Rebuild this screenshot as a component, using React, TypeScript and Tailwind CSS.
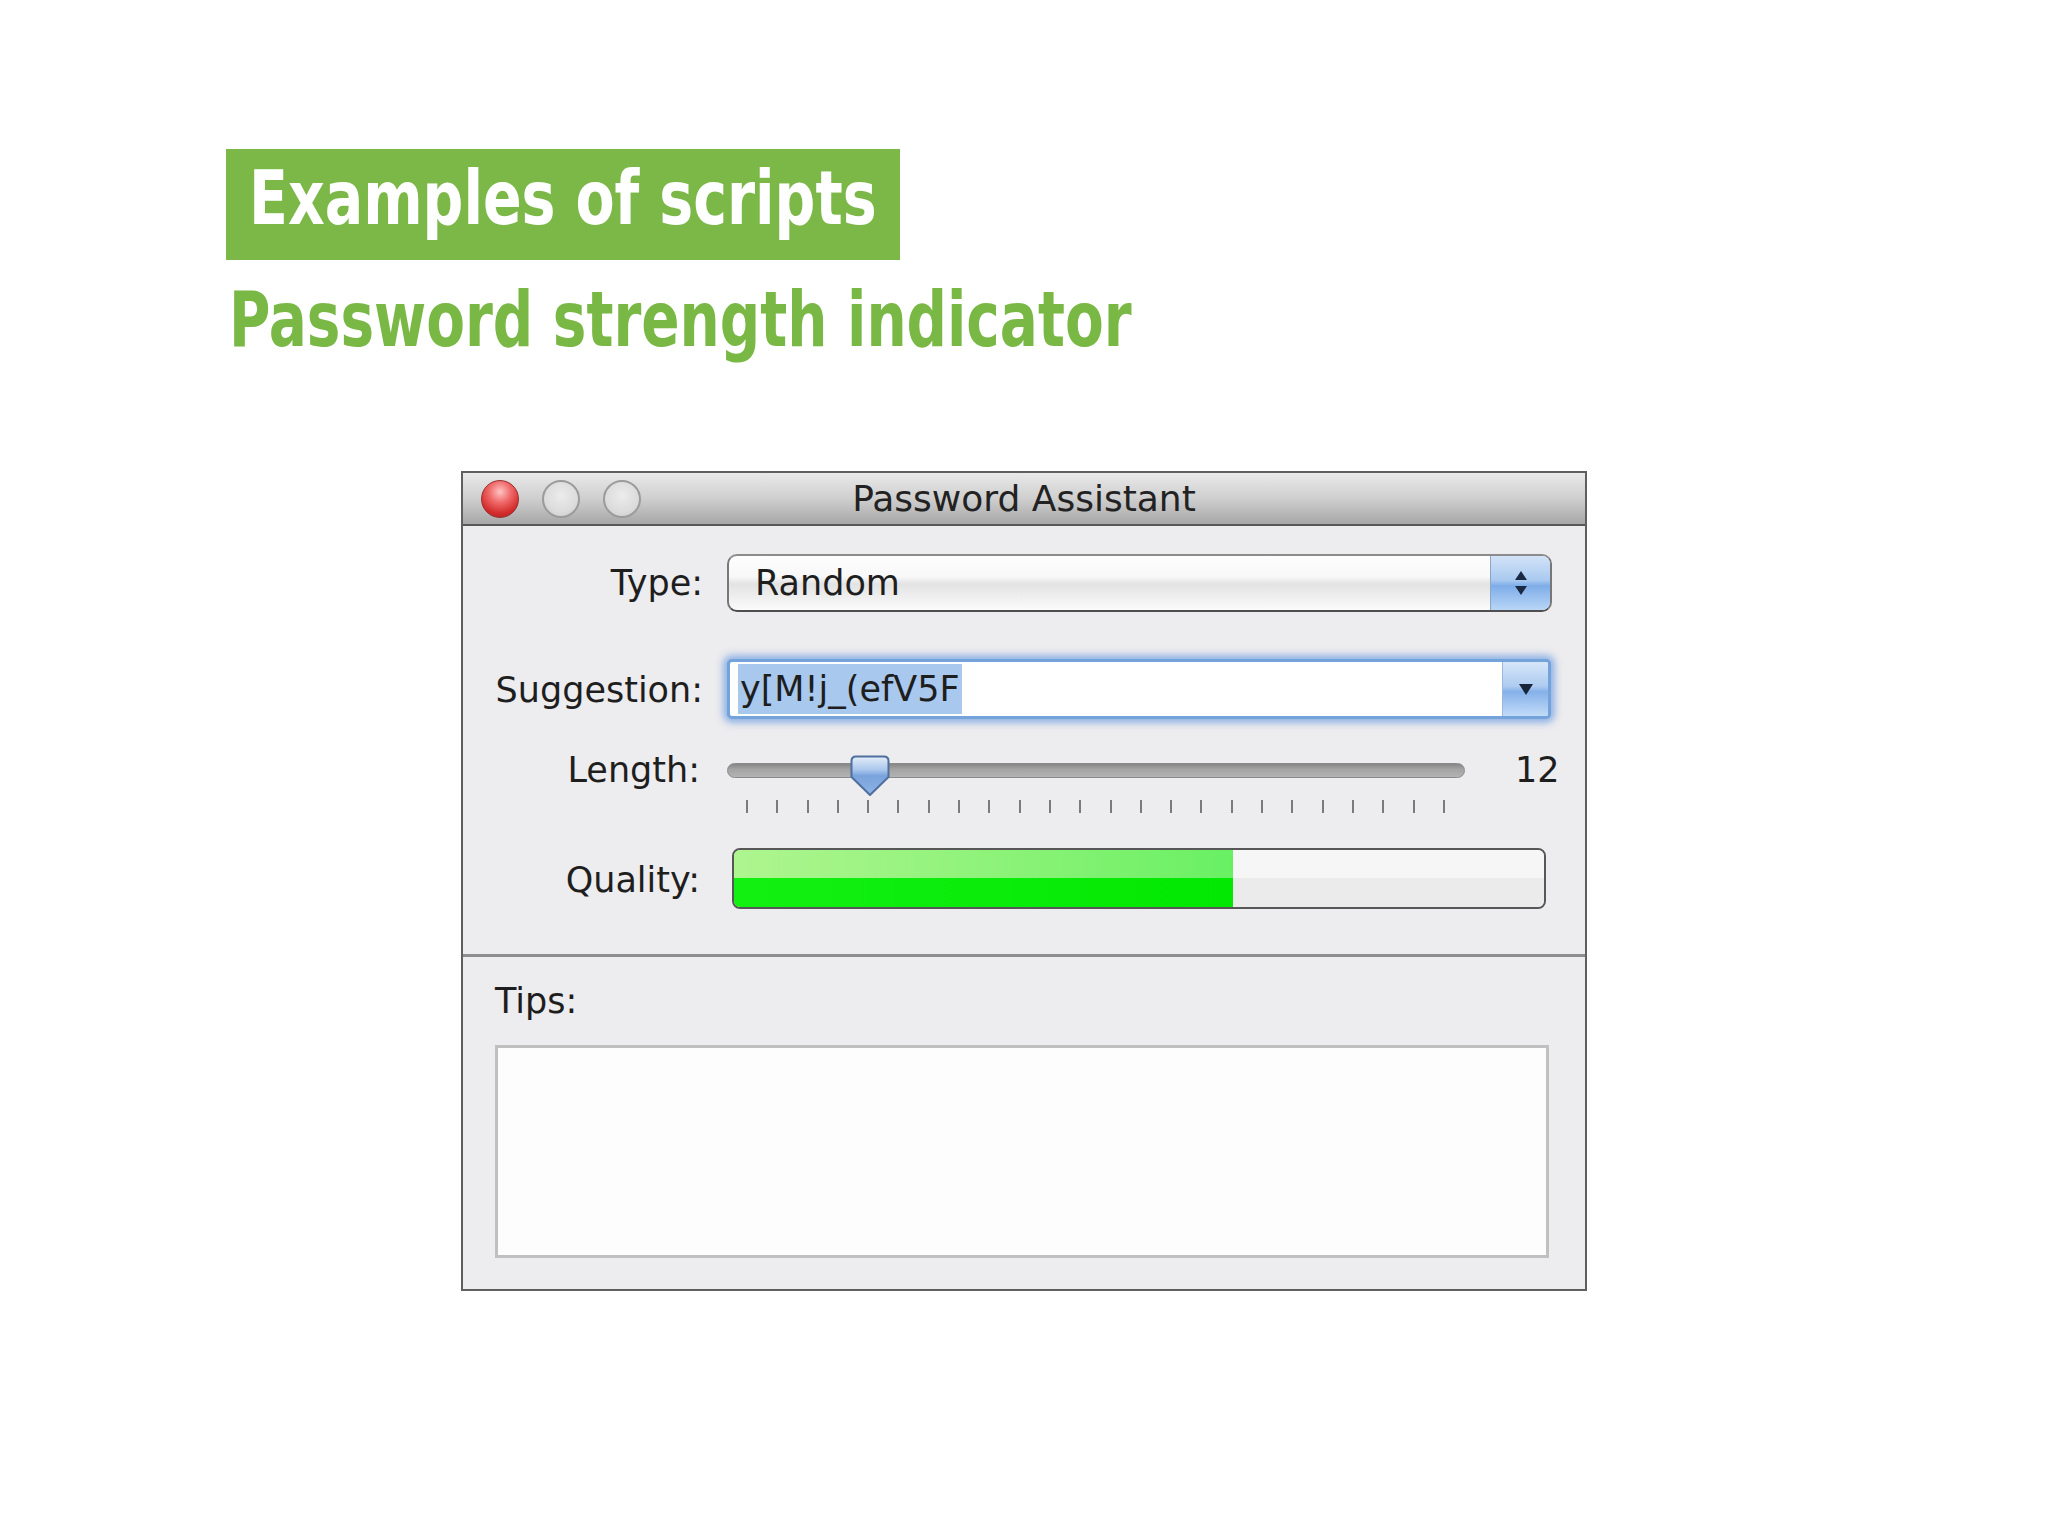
import React from "react";

const ticks = Array.from({ length: 24 }, (_, i) => i);

function Knob() {
  return (
    <svg width="40" height="42" viewBox="0 0 40 42">
      <defs>
        <linearGradient id="kg" x1="0" y1="0" x2="0" y2="1">
          <stop offset="0" stopColor="#e4eefa" />
          <stop offset="0.35" stopColor="#a9c6ec" />
          <stop offset="0.5" stopColor="#7aa3dc" />
          <stop offset="1" stopColor="#8fb4e6" />
        </linearGradient>
      </defs>
      <path
        d="M6 1.5 H34 Q38.5 1.5 38.5 6 V22 L20 40 L1.5 22 V6 Q1.5 1.5 6 1.5 Z"
        fill="url(#kg)"
        stroke="#4f6f9e"
        strokeWidth="2"
        strokeLinejoin="round"
      />
    </svg>
  );
}

function UpDown() {
  return (
    <svg width="16" height="30" viewBox="0 0 16 30">
      <path d="M8 3 L14 12 H2 Z" fill="#1b2a44" />
      <path d="M8 27 L14 18 H2 Z" fill="#1b2a44" />
    </svg>
  );
}

function Down() {
  return (
    <svg width="18" height="14" viewBox="0 0 18 14">
      <path d="M9 13 L16 2 H2 Z" fill="#17243a" />
    </svg>
  );
}

export default function App() {
  return (
    <div className="w-[2048px] h-[1536px] bg-white flex flex-col items-start overflow-hidden">
      {/* Banner */}
      <div className="mt-[149px] ml-[226px] w-[674px] h-[111px] bg-[#7bb848] pt-[12px] pl-[23px] overflow-hidden">
        <div className="origin-left scale-x-[0.845] whitespace-nowrap font-['DejaVu_Sans_Condensed','DejaVu_Sans',sans-serif] font-bold text-[75px] leading-none text-white">
          Examples of scripts
        </div>
      </div>
      {/* Subtitle */}
      <div className="mt-[21px] ml-[229px] origin-left scale-x-[0.815] whitespace-nowrap font-['DejaVu_Sans_Condensed','DejaVu_Sans',sans-serif] font-bold text-[77px] leading-none text-[#79b845]">
        Password strength indicator
      </div>

      {/* Window */}
      <div className="mt-[113px] ml-[461px] w-[1126px] border-2 border-[#5f5f5f] bg-[#edecee] flex flex-col font-['DejaVu_Sans',sans-serif] text-[35px] text-[#1e1e1e]">
        {/* Title bar */}
        <div className="h-[53px] shrink-0 bg-gradient-to-b from-[#e9e9e9] via-[#cfcfcf] to-[#a7a7a7] border-b-2 border-[#585858] grid grid-cols-[1fr_auto_1fr] items-center">
          <div className="flex items-center gap-[23px] pl-[18px]">
            <div className="w-[38px] h-[38px] rounded-full border border-[#9a3030] bg-[radial-gradient(circle_at_50%_30%,#ffc4c4_0%,#f06a6a_35%,#d32c2c_70%,#a51d1d_100%)]" />
            <div className="w-[38px] h-[38px] rounded-full border-2 border-[#9b9b9b] bg-[radial-gradient(circle_at_50%_40%,#ececec_0%,#dcdcdc_60%,#c9c9c9_100%)]" />
            <div className="w-[38px] h-[38px] rounded-full border-2 border-[#9b9b9b] bg-[radial-gradient(circle_at_50%_40%,#ececec_0%,#dcdcdc_60%,#c9c9c9_100%)]" />
          </div>
          <div className="leading-[40px] text-[36px] text-[#222] whitespace-nowrap">Password Assistant</div>
          <div />
        </div>

        {/* Type row */}
        <div className="mt-[28px] h-[58px] flex items-center">
          <div className="w-[240px] text-right leading-[40px]">Type:</div>
          <div className="ml-[24px] w-[825px] h-[58px] rounded-[10px] border-2 border-t-[#8c8c8c] border-x-[#777] border-b-[#4f4f4f] bg-[linear-gradient(to_bottom,#fdfdfd_0%,#f8f8f8_38%,#e3e3e3_52%,#ececec_70%,#fbfbfb_100%)] flex overflow-hidden">
            <div className="flex-1 pl-[26px] leading-[40px] flex items-center">Random</div>
            <div className="w-[60px] border-l border-[#8ea6c4] bg-[linear-gradient(to_bottom,#d2e3f7_0%,#a9c9f0_45%,#7eade9_55%,#b9d6f7_100%)] flex items-center justify-center">
              <UpDown />
            </div>
          </div>
        </div>

        {/* Suggestion row */}
        <div className="mt-[40px] h-[68px] flex items-center">
          <div className="w-[240px] text-right leading-[40px] mt-[8px]">Suggestion:</div>
          <div className="ml-[24px] w-[824px] h-[60px] mt-[6px] rounded-[5px] border-[3px] border-[#74a2da] shadow-[0_0_7px_4px_rgba(105,155,225,0.7)] bg-white flex overflow-hidden">
            <div className="flex-1 pl-[8px] flex items-center">
              <span className="bg-[#a9c8ee] leading-[50px] px-[2px]">y[M!j_(efV5F</span>
            </div>
            <div className="w-[46px] border-l border-[#9bb8dc] bg-[linear-gradient(to_bottom,#d6e6f8_0%,#aecbf0_45%,#85b1e9_55%,#c2dbf8_100%)] flex items-center justify-center">
              <Down />
            </div>
          </div>
        </div>

        {/* Length row */}
        <div className="mt-[30px] h-[63px] flex items-start">
          <div className="w-[240px] text-right leading-[40px] pr-[3px]">Length:</div>
          <div className="ml-[24px] w-[738px] pt-[6px] relative">
            <div className="mt-[7px] h-[15px] rounded-full border border-[#8a8a8a] bg-[linear-gradient(to_bottom,#868686_0%,#a3a3a3_40%,#b3b3b3_100%)]" />
            <div className="mt-[22px] h-[13px] pl-[19px] pr-[20px] flex justify-between">
              {ticks.map((t) => (
                <div key={t} className="w-[2px] h-[13px] bg-[#7b7b7b]" />
              ))}
            </div>
            <div className="absolute left-[123px] top-[5px]">
              <Knob />
            </div>
          </div>
          <div className="ml-[50px] leading-[40px]">12</div>
        </div>

        {/* Quality row */}
        <div className="mt-[35px] h-[60px] flex items-center">
          <div className="w-[240px] text-right leading-[40px] pr-[3px] mt-[4px]">Quality:</div>
          <div className="ml-[29px] w-[814px] h-[61px] rounded-[8px] border-2 border-[#575757] overflow-hidden flex flex-col">
            <div className="h-1/2 flex">
              <div className="w-[499px] bg-gradient-to-r from-[#aef58f] to-[#68f063]" />
              <div className="flex-1 bg-[#f6f6f6]" />
            </div>
            <div className="h-1/2 flex">
              <div className="w-[499px] bg-gradient-to-r from-[#12f012] to-[#02e802]" />
              <div className="flex-1 bg-[#ebebeb]" />
            </div>
          </div>
        </div>

        {/* Divider */}
        <div className="mt-[46px] h-[3px] bg-[#8e8e8e]" />

        {/* Tips */}
        <div className="mt-[24px] pl-[32px] leading-[40px]">Tips:</div>
        <div className="mt-[24px] ml-[32px] w-[1054px] h-[213px] border-[3px] border-[#c0c0c0] bg-[#fefdfe]" />
        <div className="h-[31px]" />
      </div>
    </div>
  );
}
